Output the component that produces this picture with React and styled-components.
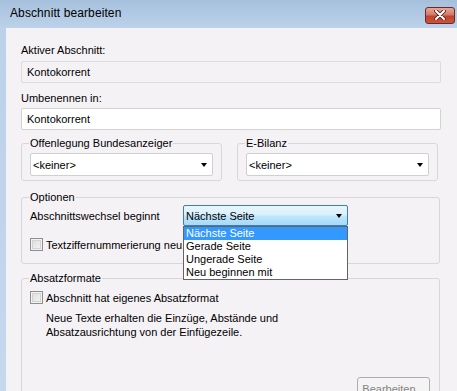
import React from 'react';
import styled, { createGlobalStyle } from 'styled-components';

const GlobalStyle = createGlobalStyle`
  html, body {
    margin: 0;
    padding: 0;
    background: #c3d7ed;
  }
  body {
    font-family: "Liberation Sans", Arial, sans-serif;
    font-size: 11px;
    color: #000;
  }
`

const Window = styled.div`
  width: 457px;
  height: 391px;
  display: flex;
  flex-direction: column;
  overflow: hidden;
  background: linear-gradient(#a6c0dc 0px, #bcd2ea 28px, #c4d8ee 100%);
`

const TitleBar = styled.div`
  height: 28px;
  flex: none;
  display: flex;
  align-items: center;
  justify-content: space-between;
  padding: 0 2px 2px 10px;
  box-sizing: border-box;
`

const Title = styled.span`
  font-size: 12px;
  color: #000;
  letter-spacing: 0.1px;
`

const CloseButton = styled.div`
  width: 30px;
  height: 17px;
  box-sizing: border-box;
  border: 1px solid #6b2a2a;
  border-radius: 3px;
  background: linear-gradient(#e6a898 0%, #d47a66 45%, #c0432b 55%, #c9553c 100%);
  display: flex;
  align-items: center;
  justify-content: center;
  margin-top: 4px;
`

const Client = styled.div`
  flex: 1;
  margin-left: 6px;
  background: #f5f2f6;
  padding: 16px 16px 0 15px;
  display: flex;
  flex-direction: column;
`

const Label = styled.div`
  line-height: 13px;
  margin-bottom: ${p => p.gap || 4}px;
`

const TextField = styled.div`
  height: 22px;
  box-sizing: border-box;
  border: 1px solid ${p => (p.readOnly ? '#dcdcdc' : '#d2d2d2')};
  border-radius: 2px;
  background: ${p => (p.readOnly ? '#f5f2f6' : '#fff')};
  padding: 0 5px;
  display: flex;
  align-items: center;
  margin-bottom: ${p => p.gap || 0}px;
`

const GroupRow = styled.div`
  display: flex;
  gap: 14px;
  margin-right: 2px;
`

const Group = styled.fieldset`
  margin: ${p => p.top || 0}px 1px 0 0;
  padding: 0 8px ${p => p.bottom || 4}px 8px;
  border: 1px solid #d7d7d9;
  border-radius: 3px;
  flex: ${p => (p.grow ? 1 : 'none')};
  min-width: 0;
  position: relative;
`

const Legend = styled.legend`
  padding: 0 1px;
  margin-left: -1px;
  line-height: 13px;
`

const Combo = styled.div`
  height: ${p => (p.active ? 21 : 23)}px;
  margin-top: ${p => (p.active ? 0 : 3)}px;
  box-sizing: border-box;
  border: 1px solid ${p => (p.active ? '#3c7fb1' : '#d0d0d0')};
  border-radius: 2px;
  background: ${p =>
    p.active
      ? 'linear-gradient(#eaf6fd 0%, #d9f0fc 45%, #bee6fd 55%, #a7d9f5 100%)'
      : '#fff'};
  display: flex;
  align-items: center;
  justify-content: space-between;
  padding: 0 4px 0 2px;
  width: ${p => (p.width ? p.width + 'px' : 'auto')};
`

const Arrow = styled.span`
  width: 0;
  height: 0;
  border-left: 3.5px solid transparent;
  border-right: 3.5px solid transparent;
  border-top: 4px solid #000;
  margin-right: 1px;
`

const OptionRow = styled.div`
  display: flex;
  align-items: center;
  height: ${p => p.h || 21}px;
  margin-top: ${p => p.top || 0}px;
`

const RowLabel = styled.div`
  width: 153px;
`

const CheckRow = styled.div`
  display: flex;
  align-items: center;
  gap: 3px;
  height: 13px;
  margin-top: ${p => p.top || 0}px;
`

const CheckBox = styled.span`
  width: 13px;
  height: 13px;
  box-sizing: border-box;
  border: 1px solid #8f8f8f;
  background: linear-gradient(135deg, #dcdcdc 0%, #f6f6f6 100%);
  box-shadow: inset 0 0 0 1px #f2f2f2, inset 0 0 0 2px #d2d2d2;
  flex: none;
`

const Hidden = styled.div`
  flex: 1;
  height: 23px;
  border-right: 1px solid #c4c4c4;
  margin-right: 88px;
`

const DropList = styled.div`
  position: absolute;
  left: 153px;
  top: 21px;
  width: 165px;
  box-sizing: border-box;
  border: 1px solid #646464;
  background: #fff;
  z-index: 2;
`

const DropItem = styled.div`
  height: 13px;
  line-height: 13px;
  padding-left: 2px;
  background: ${p => (p.selected ? '#3399ff' : '#fff')};
  color: ${p => (p.selected ? '#fff' : '#000')};
`

const ComboWrap = styled.div`
  position: relative;
`

const Description = styled.div`
  margin: 7px 0 0 16px;
  line-height: 14px;
`

const ButtonBar = styled.div`
  display: flex;
  justify-content: flex-end;
  margin-top: 38px;
  padding-right: 1px;
`

const Button = styled.div`
  width: 73px;
  height: 23px;
  box-sizing: border-box;
  border: 1px solid #adadad;
  border-radius: 3px;
  background: #f4f4f4;
  color: #838383;
  display: flex;
  align-items: center;
  justify-content: center;
`

const items = ['Nächste Seite', 'Gerade Seite', 'Ungerade Seite', 'Neu beginnen mit'];

const App = () => (
  <React.Fragment>
    <GlobalStyle />
    <Window>
      <TitleBar>
        <Title>Abschnitt bearbeiten</Title>
        <CloseButton>
          <svg width="12" height="10" viewBox="0 0 12 10">
            <path d="M2 1 L10 9 M10 1 L2 9" stroke="#4a2020" strokeWidth="3.6" strokeLinecap="round" />
            <path d="M2 1 L10 9 M10 1 L2 9" stroke="#fff" strokeWidth="2" strokeLinecap="round" />
          </svg>
        </CloseButton>
      </TitleBar>
      <Client>
        <Label>Aktiver Abschnitt:</Label>
        <TextField readOnly gap={9}>Kontokorrent</TextField>
        <Label gap={3}>Umbenennen in:</Label>
        <TextField gap={7}>Kontokorrent</TextField>
        <GroupRow>
          <Group grow>
            <Legend>Offenlegung Bundesanzeiger</Legend>
            <Combo>
              &lt;keiner&gt;
              <Arrow />
            </Combo>
          </Group>
          <Group grow>
            <Legend>E-Bilanz</Legend>
            <Combo>
              &lt;keiner&gt;
              <Arrow />
            </Combo>
          </Group>
        </GroupRow>
        <Group top={10} bottom={7}>
          <Legend>Optionen</Legend>
          <ComboWrap>
            <OptionRow top={1}>
              <RowLabel>Abschnittswechsel beginnt</RowLabel>
              <Combo active width={165}>
                Nächste Seite
                <Arrow />
              </Combo>
            </OptionRow>
            <DropList>
              {items.map((it, i) => (
                <DropItem key={it} selected={i === 0}>{it}</DropItem>
              ))}
            </DropList>
            <OptionRow h={23} top={7}>
              <CheckRow>
                <CheckBox />
                <span>Textziffernummerierung neu</span>
              </CheckRow>
              <Hidden />
            </OptionRow>
          </ComboWrap>
        </Group>
        <Group top={8} bottom={0} style={{ flex: 1 }}>
          <Legend>Absatzformate</Legend>
          <CheckRow top={6}>
            <CheckBox />
            <span>Abschnitt hat eigenes Absatzformat</span>
          </CheckRow>
          <Description>
            Neue Texte erhalten die Einzüge, Abstände und
            <br />
            Absatzausrichtung von der Einfügezeile.
          </Description>
          <ButtonBar>
            <Button>Bearbeiten...</Button>
          </ButtonBar>
        </Group>
      </Client>
    </Window>
  </React.Fragment>
);

export default App;
